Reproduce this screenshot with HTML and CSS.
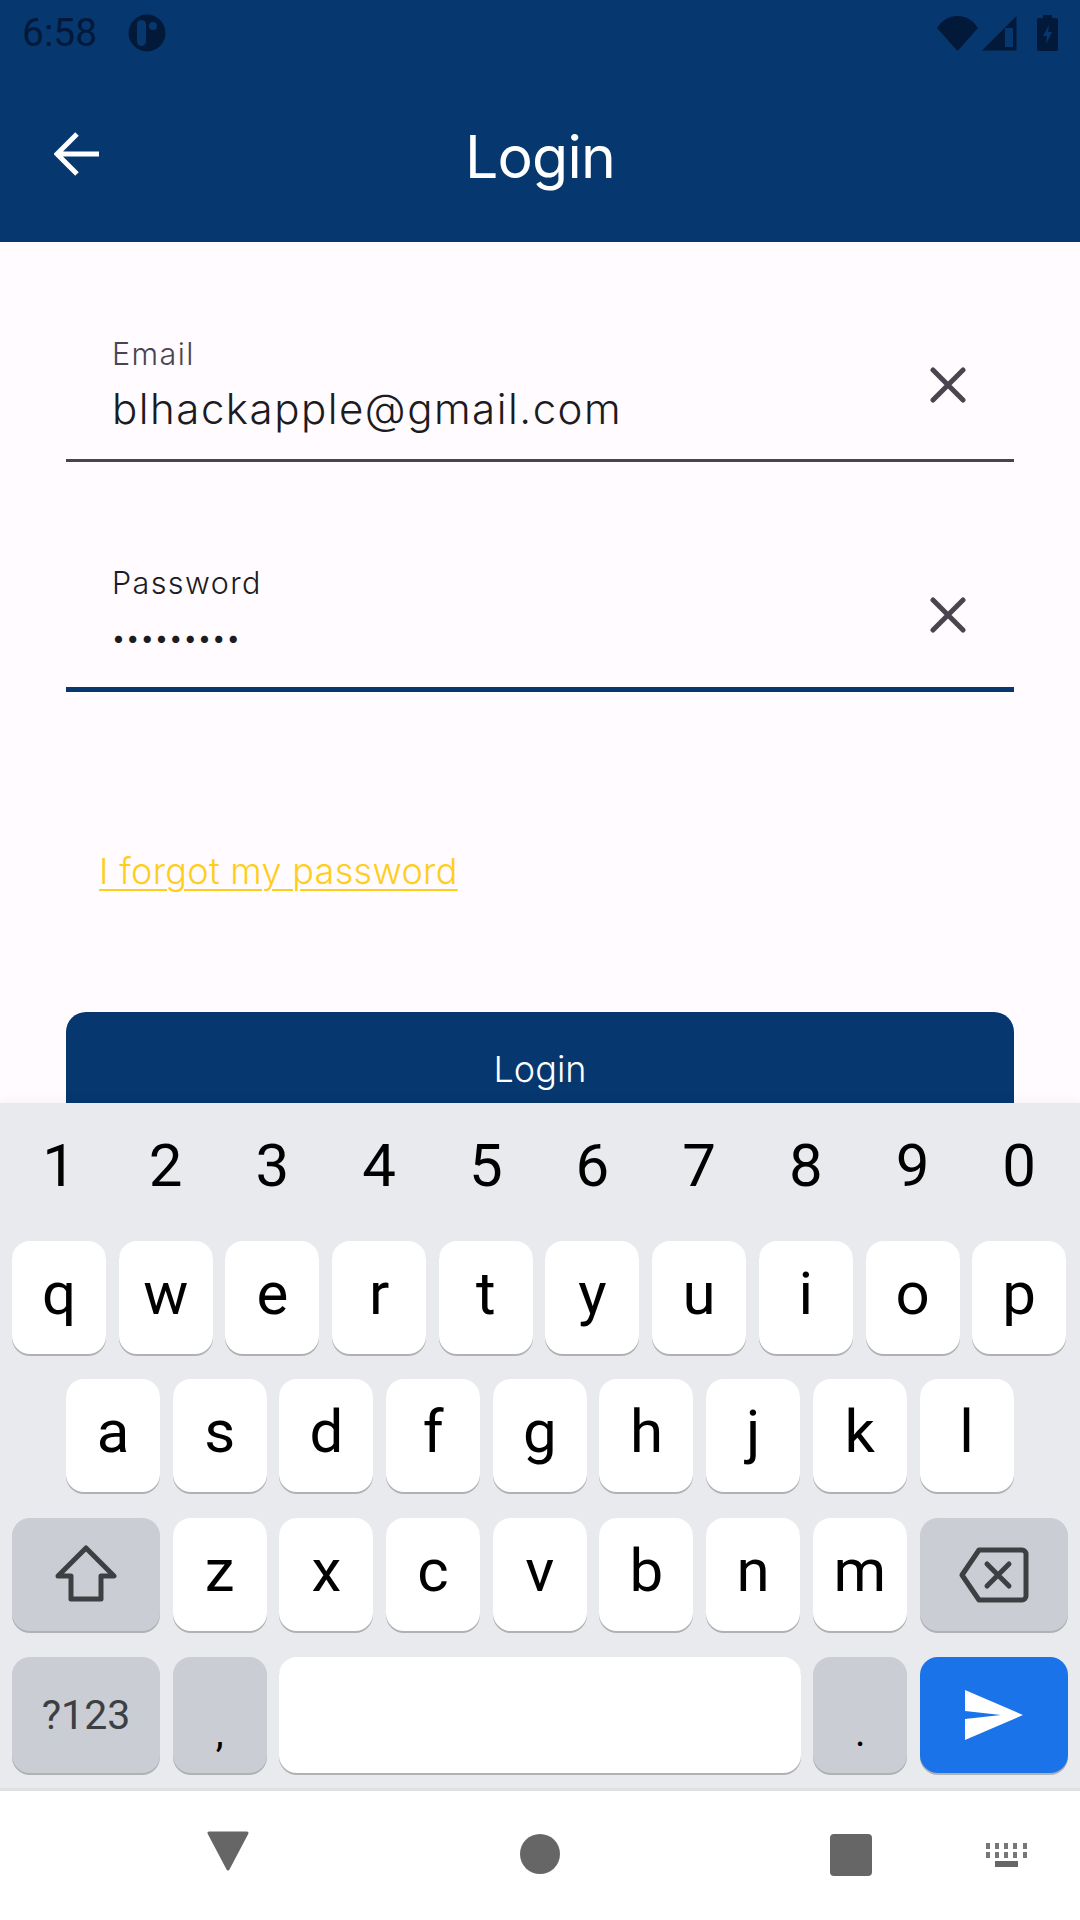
FILE: index.html
```html
<!DOCTYPE html>
<html lang="en">
<head>
  <meta charset="UTF-8" />
  <meta name="viewport" content="width=device-width, initial-scale=1" />
  <title>Login</title>
  <link rel="stylesheet" href="styles.css">
</head>
<body>
  <div class="header">
    <div class="statusbar">
      <span class="clock">6:58</span>
      <svg class="app-dot" width="38" height="38" viewBox="0 0 38 38">
        <circle cx="19" cy="19" r="18.5" fill="#02193a"/>
        <rect x="9" y="6" width="9" height="26" rx="4.5" fill="#06386f"/>
        <circle cx="25" cy="12" r="4" fill="#06386f"/>
      </svg>
      <div class="status-icons">
        <svg width="41" height="35" viewBox="0 0 41 35"><path d="M0 12C5 4 12 0 20.500 0S36 4 41 12L20.500 35Z" fill="#02193a"/></svg>
        <svg width="35" height="35" viewBox="0 0 35 35"><path fill-rule="evenodd" d="M34.500 0V34.500H0ZM23 12V31H31V12Z" fill="#02193a"/><rect x="23" y="12" width="8" height="19" fill="#06386f"/></svg>
        <svg class="battery" width="21" height="36" viewBox="0 0 21 36"><path d="M6 0H15V3H19A2 2 0 0 1 21 5V34A2 2 0 0 1 19 36H2A2 2 0 0 1 0 34V5A2 2 0 0 1 2 3H6Z" fill="#02193a"/><path d="M12 10L6 21H10L9 29L15 17H11Z" fill="#06386f"/></svg>
      </div>
    </div>
    <div class="toolbar">
      <svg class="back" width="46" height="46" viewBox="0 0 46 46">
        <path d="M3 23H45M23 3L3 23L23 43" fill="none" stroke="#fff" stroke-width="5"/>
      </svg>
      <h1>Login</h1>
    </div>
  </div>

  <div class="content">
    <div class="field first">
      <div class="field-text">
        <div class="field-label">Email</div>
        <div class="field-value">blhackapple@gmail.com</div>
      </div>
      <svg class="clear" width="36" height="36" viewBox="0 0 36 36"><path d="M3 3L33 33M33 3L3 33" stroke="#49454f" stroke-width="5" stroke-linecap="round"/></svg>
    </div>
    <div class="field focused">
      <div class="field-text">
        <div class="field-label">Password</div>
        <div class="field-dots">•••••••••</div>
      </div>
      <svg class="clear" width="36" height="36" viewBox="0 0 36 36"><path d="M3 3L33 33M33 3L3 33" stroke="#49454f" stroke-width="5" stroke-linecap="round"/></svg>
    </div>
    <a class="forgot" href="#">I forgot my password</a>
    <div class="login-btn">Login</div>
  </div>

  <div class="keyboard">
    <div class="digits">
      <span>1</span><span>2</span><span>3</span><span>4</span><span>5</span><span>6</span><span>7</span><span>8</span><span>9</span><span>0</span>
    </div>
    <div class="kb-row top">
      <div class="key">q</div><div class="key">w</div><div class="key">e</div><div class="key">r</div><div class="key">t</div><div class="key">y</div><div class="key">u</div><div class="key">i</div><div class="key">o</div><div class="key">p</div>
    </div>
    <div class="kb-row inset">
      <div class="key">a</div><div class="key">s</div><div class="key">d</div><div class="key">f</div><div class="key">g</div><div class="key">h</div><div class="key">j</div><div class="key">k</div><div class="key">l</div>
    </div>
    <div class="kb-row">
      <div class="key wide fn">
        <svg width="64" height="60" viewBox="0 0 64 60"><path d="M32 3L60 31H47V54H17V31H4Z" fill="none" stroke="#3c4043" stroke-width="5" stroke-linejoin="round"/></svg>
      </div>
      <div class="key">z</div><div class="key">x</div><div class="key">c</div><div class="key">v</div><div class="key">b</div><div class="key">n</div><div class="key">m</div>
      <div class="key wide fn">
        <svg width="70" height="56" viewBox="0 0 70 56"><path d="M20 3H63A4 4 0 0 1 67 7V49A4 4 0 0 1 63 53H20L3 28Z" fill="none" stroke="#3c4043" stroke-width="5" stroke-linejoin="round"/><path d="M28 17L50 39M50 17L28 39" stroke="#3c4043" stroke-width="5" stroke-linecap="round"/></svg>
      </div>
    </div>
    <div class="kb-row last">
      <div class="key wide fn symbols">?123</div>
      <div class="key fn punct">,</div>
      <div class="key space"></div>
      <div class="key fn punct">.</div>
      <div class="key wide enter">
        <svg width="58" height="50" viewBox="0 0 58 50"><path d="M0 0L58 25L0 50V29L36 25L0 21Z" fill="#fff"/></svg>
      </div>
    </div>
  </div>

  <div class="navbar">
    <svg class="nav-back" width="46" height="40" viewBox="0 0 46 40"><path d="M4 2H42L23 38Z" fill="#666" stroke="#666" stroke-width="3" stroke-linejoin="round"/></svg>
    <svg class="nav-home" width="40" height="40" viewBox="0 0 40 40"><circle cx="20" cy="20" r="20" fill="#666"/></svg>
    <svg class="nav-recent" width="42" height="42" viewBox="0 0 42 42"><rect width="42" height="42" rx="4" fill="#666"/></svg>
    <svg class="nav-kb" width="42" height="24" viewBox="0 0 42 24" fill="#777">
      <rect x="0" y="0" width="4" height="6"/><rect x="9" y="0" width="4" height="6"/><rect x="18" y="0" width="4" height="6"/><rect x="27" y="0" width="4" height="6"/><rect x="37" y="0" width="4" height="6"/>
      <rect x="0" y="9" width="4" height="6"/><rect x="9" y="9" width="4" height="6"/><rect x="18" y="9" width="4" height="6"/><rect x="27" y="9" width="4" height="6"/><rect x="37" y="9" width="4" height="6"/>
      <rect x="9" y="18" width="23" height="6" fill="#666"/>
    </svg>
  </div>
</body>
</html>
```

FILE: styles.css
```css
body {
  margin: 0;
  width: 1080px;
  height: 1920px;
  overflow: hidden;
  background-color: #fff;
  font-family: Inter, sans-serif;
}

.header {
  height: 242px;
  background-color: #06386f;
}

.statusbar {
  height: 66px;
  padding: 0 22px 0 22px;
  display: flex;
  align-items: center;
}

.clock {
  font-family: Roboto, sans-serif;
  font-size: 39px;
  color: #02193a;
}

.app-dot {
  margin-left: 31px;
}

.status-icons {
  margin-left: auto;
  display: flex;
  align-items: center;
  gap: 4px;
}

.battery {
  margin-left: 16px;
}

.toolbar {
  position: relative;
  height: 176px;
  display: flex;
  align-items: center;
  justify-content: center;
}

.back {
  position: absolute;
  left: 54px;
  top: 65px;
}

.toolbar h1 {
  margin: 0;
  padding-top: 5px;
  font-size: 59px;
  font-weight: 400;
  color: #fff;
  letter-spacing: -0.8px;
}

.content {
  height: 861px;
  overflow: hidden;
  background-color: #fffbfe;
  padding: 0 66px;
  display: flex;
  flex-direction: column;
}

.field {
  flex: 0 0 auto;
  height: 148px;
  padding: 3px 48px 0 46px;
  display: flex;
  align-items: center;
  justify-content: space-between;
  border-bottom: 3px solid #49454f;
  margin-top: 76px;
}

.field.first {
  margin-top: 66px;
}

.field.focused {
  height: 146px;
  border-bottom: 5px solid #06386f;
}

.clear {
  margin-top: -1px;
}

.focused .clear {
  margin-top: 1px;
}

.field-label {
  font-size: 30.5px;
  font-weight: 300;
  letter-spacing: 1.4px;
  line-height: 36px;
  color: #49454f;
}

.focused .field-label {
  color: #1c1b1f;
}

.field-value,
.field-dots {
  margin-top: 11px;
  line-height: 52px;
  color: #1c1b1f;
}

.field-value {
  font-size: 42px;
  font-weight: 300;
  letter-spacing: 1.5px;
}

.field-dots {
  font-size: 23px;
  letter-spacing: 1.4px;
}

.forgot {
  flex: 0 0 auto;
  margin: 157px 0 0 33px;
  align-self: flex-start;
  font-size: 36px;
  font-weight: 300;
  letter-spacing: 0.3px;
  line-height: 44px;
  color: #ffcd1c;
  text-decoration: underline;
  text-underline-offset: 5px;
  text-decoration-thickness: 2px;
}

.login-btn {
  margin-top: 119px;
  flex: 0 0 114px;
  border-radius: 20px;
  background-color: #06386f;
  color: #fff;
  font-size: 36px;
  font-weight: 300;
  display: flex;
  align-items: center;
  justify-content: center;
}

.keyboard {
  height: 685px;
  background-color: #e8eaed;
  border-bottom: 3px solid #e0e0e0;
  box-shadow: 0 -4px 8px rgba(0, 0, 0, 0.03);
  position: relative;
  font-family: Roboto, sans-serif;
  color: #000;
}

.digits {
  height: 125px;
  padding: 0 12px 13px;
  display: flex;
  gap: 12.7px;
  align-items: center;
  font-size: 60px;
}

.digits span {
  flex: 0 0 94px;
  text-align: center;
}

.kb-row {
  height: 113px;
  margin-bottom: 26px;
  padding: 0 12px;
  display: flex;
  gap: 12.7px;
}

.kb-row.top {
  margin-bottom: 25px;
}

.kb-row.inset {
  padding: 0 66px;
}

.kb-row.last {
  height: 116px;
  margin-bottom: 0;
}

.key {
  flex: 0 0 94px;
  box-sizing: border-box;
  padding-bottom: 8px;
  display: flex;
  align-items: center;
  justify-content: center;
  border-radius: 18px;
  background-color: #fff;
  box-shadow: 0 2px 0 #b0b1b3;
  font-size: 60px;
}

.key.wide {
  flex: 0 0 148px;
  padding-bottom: 0;
}

.key.fn {
  background-color: #cacdd4;
}

.key.space {
  flex: 1;
}

.key.symbols {
  font-size: 41px;
  color: #3c4043;
}

.key.punct {
  font-size: 40px;
  padding: 34px 0 0;
}

.key.enter {
  background-color: #1a73e8;
}

.navbar {
  height: 129px;
  position: relative;
}

.navbar svg {
  position: absolute;
}

.nav-back {
  left: 205px;
  top: 40px;
}

.nav-home {
  left: 520px;
  top: 43px;
}

.nav-recent {
  left: 830px;
  top: 43px;
}

.nav-kb {
  left: 986px;
  top: 52px;
}
```
